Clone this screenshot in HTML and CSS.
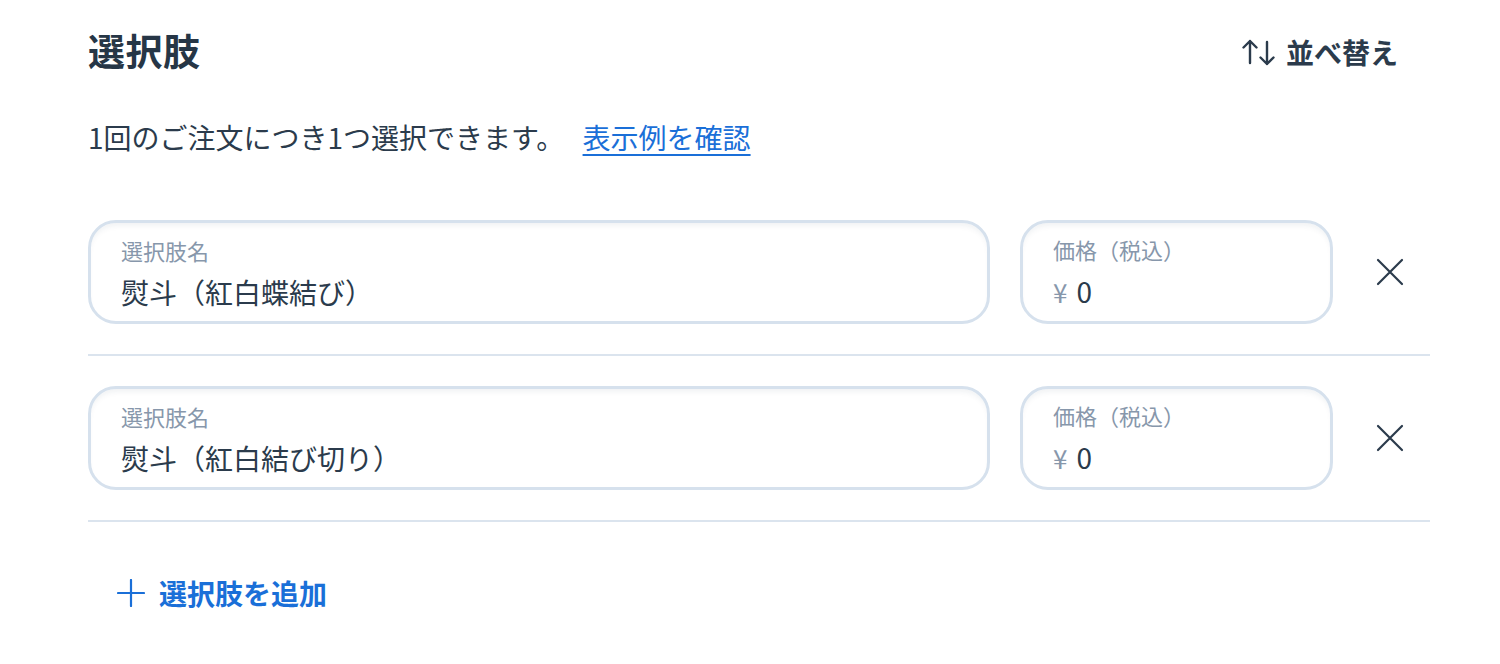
FILE: index.html
```html
<!DOCTYPE html>
<html lang="ja">
<head>
    <meta charset="UTF-8">
    <meta name="viewport" content="width=device-width, initial-scale=1.0">
    <title>選択肢</title>
    <link rel="stylesheet" href="styles.css">
</head>
<body>
    <div class="panel">
        <div class="panel-header">
            <h1>選択肢</h1>
            <button type="button" class="sort-btn">
                <svg width="34" height="28" viewBox="0 0 34 28" fill="none" stroke="#2b3b4c" stroke-width="2.4" stroke-linecap="round" stroke-linejoin="round">
                    <path d="M8 25V3M1.5 9.5L8 3l6.5 6.5"/>
                    <path d="M25 4v22M18.5 19.5L25 26l6.5-6.5"/>
                </svg>
                <span>並べ替え</span>
            </button>
        </div>

        <p class="hint">1回のご注文につき1つ選択できます。 <a href="#" class="hint-link">表示例を確認</a></p>

        <div class="option-list">
            <div class="option-row">
                <div class="field field-name">
                    <span class="field-label">選択肢名</span>
                    <span class="field-value">熨斗（紅白蝶結び）</span>
                </div>
                <div class="field field-price">
                    <span class="field-label">価格（税込）</span>
                    <span class="field-value"><span class="yen">¥</span>0</span>
                </div>
                <button type="button" class="remove-btn" aria-label="削除">
                    <svg width="28" height="28" viewBox="0 0 28 28" fill="none" stroke="#2b3b4c" stroke-width="2.2" stroke-linecap="round">
                        <path d="M2 2l24 24M26 2L2 26"/>
                    </svg>
                </button>
            </div>
            <div class="option-row">
                <div class="field field-name">
                    <span class="field-label">選択肢名</span>
                    <span class="field-value">熨斗（紅白結び切り）</span>
                </div>
                <div class="field field-price">
                    <span class="field-label">価格（税込）</span>
                    <span class="field-value"><span class="yen">¥</span>0</span>
                </div>
                <button type="button" class="remove-btn" aria-label="削除">
                    <svg width="28" height="28" viewBox="0 0 28 28" fill="none" stroke="#2b3b4c" stroke-width="2.2" stroke-linecap="round">
                        <path d="M2 2l24 24M26 2L2 26"/>
                    </svg>
                </button>
            </div>
        </div>

        <button type="button" class="add-btn">
            <svg width="28" height="28" viewBox="0 0 28 28" fill="none" stroke="#1a6fd8" stroke-width="2.2" stroke-linecap="round">
                <path d="M14 1v26M1 14h26"/>
            </svg>
            <span>選択肢を追加</span>
        </button>
    </div>
</body>
</html>
```

FILE: styles.css
```css
body {
    margin: 0;
    font-family: "Noto Sans CJK JP", "Noto Sans", sans-serif;
    color: #2b3b4c;
    background-color: #ffffff;
}
.panel {
    width: 1342px;
    margin-left: 88px;
}
.panel-header {
    display: flex;
    justify-content: space-between;
    align-items: center;
    height: 100px;
    padding-bottom: 4px;
}
h1 {
    margin: 0;
    font-size: 37px;
    font-weight: bold;
    color: #263646;
    letter-spacing: 0.5px;
}
.sort-btn {
    display: flex;
    align-items: center;
    gap: 10px;
    margin-right: 32px;
    margin-top: 4px;
    padding: 0;
    background: none;
    border: none;
    font-family: inherit;
    font-size: 28px;
    font-weight: bold;
    color: #2b3b4c;
    cursor: pointer;
}
.hint {
    margin: 0;
    height: 66px;
    font-size: 28px;
    line-height: 66px;
    color: #2b3b4c;
}
.hint-link {
    margin-left: 12px;
    color: #1a6fd8;
    text-decoration: underline;
    text-underline-offset: 5px;
    text-decoration-thickness: 2px;
}
.option-list {
    margin-top: 50px;
}
.option-row {
    display: flex;
    align-items: center;
    gap: 30px;
    padding-bottom: 30px;
    margin-bottom: 30px;
    border-bottom: 2px solid #dbe4ee;
}
.field {
    display: flex;
    flex-direction: column;
    justify-content: center;
    box-sizing: border-box;
    height: 104px;
    padding: 0 30px;
    border: 3px solid #d6e1ed;
    border-radius: 28px;
    box-shadow: inset 0 5px 6px -3px rgba(30, 50, 80, 0.08);
}
.field-name {
    flex: 1;
}
.field-price {
    width: 313px;
}
.field-label {
    font-size: 22px;
    line-height: 30px;
    color: #8797ab;
}
.field-value {
    margin-top: 9px;
    font-size: 28px;
    line-height: 36px;
    color: #2b3b4c;
}
.yen {
    margin-right: 9px;
    font-size: 26px;
    color: #8797ab;
}
.remove-btn {
    display: flex;
    align-items: center;
    justify-content: flex-start;
    box-sizing: border-box;
    width: 67px;
    padding: 0 0 0 13px;
    background: none;
    border: none;
    cursor: pointer;
}
.add-btn {
    display: flex;
    align-items: center;
    gap: 14px;
    margin-top: 51px;
    margin-left: 29px;
    padding: 0;
    background: none;
    border: none;
    font-family: inherit;
    font-size: 28px;
    font-weight: bold;
    color: #1a6fd8;
    cursor: pointer;
}
```
